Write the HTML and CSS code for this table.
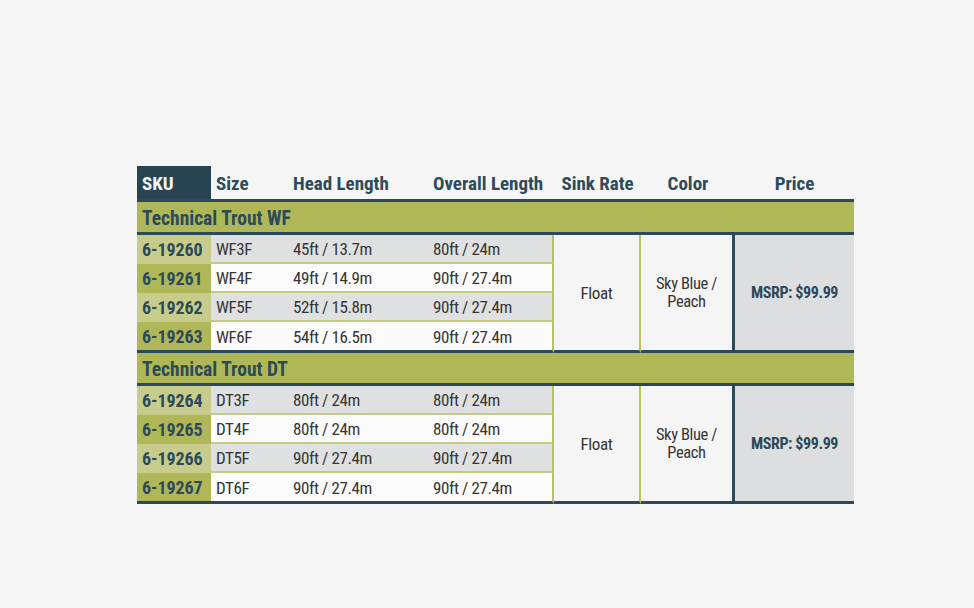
FILE: index.html
```html
<!DOCTYPE html>
<html lang="en">
<head>
<meta charset="utf-8">
<title>Technical Trout</title>
<link rel="stylesheet" href="styles.css">
</head>
<body>
<main class="page">
  <table class="spec">
    <colgroup>
      <col class="c-sku"><col class="c-size"><col class="c-head"><col class="c-overall"><col class="c-sink"><col class="c-color"><col class="c-price">
    </colgroup>
    <thead>
      <tr class="head-row">
        <th class="sku-h">SKU</th>
        <th class="left">Size</th>
        <th class="left">Head Length</th>
        <th class="left">Overall Length</th>
        <th>Sink Rate</th>
        <th>Color</th>
        <th>Price</th>
      </tr>
    </thead>
    <tbody>
      <tr class="group"><td colspan="7">Technical Trout WF</td></tr>
      <tr class="row odd">
        <td class="sku">6-19260</td><td>WF3F</td><td>45ft / 13.7m</td><td class="ov">80ft / 24m</td>
        <td class="merged" rowspan="4">Float</td>
        <td class="merged color" rowspan="4"><span class="two">Sky Blue /<br>Peach</span></td>
        <td class="price" rowspan="4">MSRP: $99.99</td>
      </tr>
      <tr class="row even"><td class="sku">6-19261</td><td>WF4F</td><td>49ft / 14.9m</td><td class="ov">90ft / 27.4m</td></tr>
      <tr class="row odd"><td class="sku">6-19262</td><td>WF5F</td><td>52ft / 15.8m</td><td class="ov">90ft / 27.4m</td></tr>
      <tr class="row even last"><td class="sku">6-19263</td><td>WF6F</td><td>54ft / 16.5m</td><td class="ov">90ft / 27.4m</td></tr>

      <tr class="group"><td colspan="7">Technical Trout DT</td></tr>
      <tr class="row odd">
        <td class="sku">6-19264</td><td>DT3F</td><td>80ft / 24m</td><td class="ov">80ft / 24m</td>
        <td class="merged" rowspan="4">Float</td>
        <td class="merged color" rowspan="4"><span class="two">Sky Blue /<br>Peach</span></td>
        <td class="price" rowspan="4">MSRP: $99.99</td>
      </tr>
      <tr class="row even"><td class="sku">6-19265</td><td>DT4F</td><td>80ft / 24m</td><td class="ov">80ft / 24m</td></tr>
      <tr class="row odd"><td class="sku">6-19266</td><td>DT5F</td><td>90ft / 27.4m</td><td class="ov">90ft / 27.4m</td></tr>
      <tr class="row even last"><td class="sku">6-19267</td><td>DT6F</td><td>90ft / 27.4m</td><td class="ov">90ft / 27.4m</td></tr>
    </tbody>
  </table>
</main>
</body>
</html>
```
FILE: styles.css
```css
html, body {
  margin: 0;
  padding: 0;
  background: #f5f5f5;
}

.page {
  padding: 166px 0 0 137px;
}

.spec {
  border-collapse: separate;
  border-spacing: 0;
  table-layout: fixed;
  width: 717px;
  font-family: "Roboto Condensed", "Roboto", sans-serif;
  color: #353535;
}

.c-sku { width: 74px; }
.c-size { width: 77px; }
.c-head { width: 140px; }
.c-overall { width: 126px; }
.c-sink { width: 87px; }
.c-color { width: 94px; }
.c-price { width: 119px; }

.spec th, .spec td {
  padding: 0;
  box-sizing: border-box;
}

/* header */
.head-row th {
  height: 36px;
  padding: 2px 0 0 0;
  font-size: 19px;
  font-weight: 700;
  color: #2c4a59;
  text-align: center;
  vertical-align: middle;
  border-bottom: 3px solid #2b4957;
}
.head-row th.left {
  text-align: left;
  padding-left: 5px;
}
.head-row th.sku-h {
  background: #284452;
  color: #f4f6f5;
  text-align: left;
  padding-left: 5px;
}

/* group row */
.group td {
  height: 33px;
  background: #b0b757;
  border-bottom: 3px solid #2b4957;
  font-size: 19.5px;
  font-weight: 700;
  color: #2c4a59;
  padding: 2px 0 0 5px;
  vertical-align: middle;
}

/* data rows */
.row td {
  height: 29px;
  font-size: 17px;
  letter-spacing: -0.4px;
  padding: 1px 0 0 5px;
  vertical-align: middle;
  border-bottom: 2px solid #c4cb80;
  white-space: nowrap;
}
.row.last td {
  height: 31px;
  border-bottom: 3px solid #2b4957;
}
.row.odd td { background: #dfe0e2; }
.row.even td { background: #fbfbfb; }

.row td.sku {
  font-weight: 700;
  color: #2c4a59;
  font-size: 18px;
  letter-spacing: -0.1px;
}
.row.odd td.sku { background: #c7cc8d; border-bottom-color: #c7cc8d; }
.row.even td.sku { background: #b0b759; border-bottom-color: #b0b759; }
.row.last td.sku { border-bottom-color: #2b4957; }

.row td.ov {
  border-right: 2px solid #b8c062;
}

.row td.merged {
  background: #f5f5f5;
  text-align: center;
  padding: 0;
  border-right: 2px solid #b8c062;
  border-bottom: 3px solid #2b4957;
}
.row td.color {
  border-right: 3px solid #2b4957;
}
.two {
  display: inline-block;
  font-size: 16.5px;
  line-height: 18px;
  padding-top: 1px;
}
.row td.price {
  background: #dddee0;
  text-align: center;
  padding: 0;
  font-size: 16px;
  letter-spacing: -0.4px;
  font-weight: 700;
  color: #2c4a59;
  border-bottom: 3px solid #2b4957;
}
```
